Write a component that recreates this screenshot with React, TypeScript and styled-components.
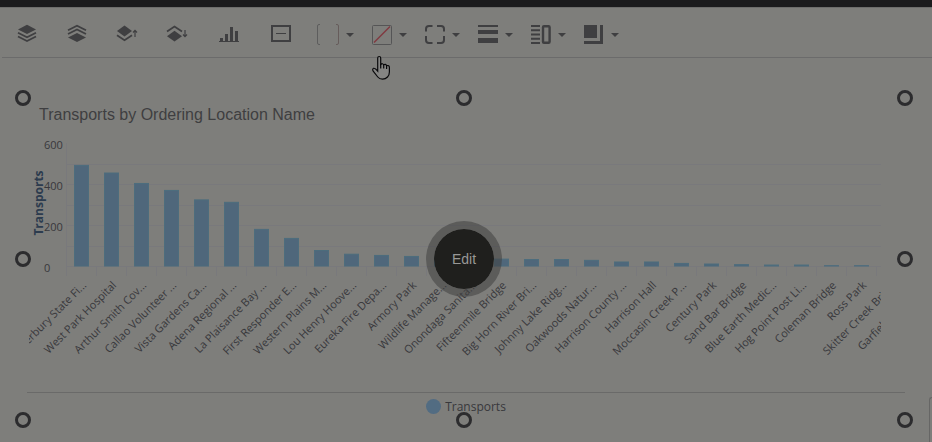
import React from "react";
import styled, { createGlobalStyle } from "styled-components";

const ink = "#3f3f41";

const GlobalStyle = createGlobalStyle`
  body {
    margin: 0;
    background: #7e7e7b;
    font-family: "Liberation Sans", Arial, sans-serif;
    overflow: hidden;
  }
`;

const Page = styled.main`
  display: flex;
  flex-direction: column;
  min-height: 100vh;
`;

const TopBar = styled.div`
  height: 7px;
  background: #1b1b1d;
  border-bottom: 1px solid #6d6d6c;
`;

const Toolbar = styled.div`
  position: relative;
  display: flex;
  margin-left: 2px;
  padding: 15px 13px 10px;
  border-bottom: 1px solid #6b6b6b;
`;

const ToolGroup = styled.div<{ $gap: number; $before?: number }>`
  display: flex;
  gap: ${(p) => p.$gap}px;
  margin-left: ${(p) => p.$before ?? 0}px;
`;

const ToolButton = styled.button`
  display: flex;
  align-items: center;
  gap: 6px;
  padding: 0;
  border: 0;
  background: none;
  color: ${ink};
`;

const Glyph = styled.svg`
  display: block;
  width: 24px;
  height: 24px;
`;

const Caret = styled.svg`
  display: block;
  width: 8px;
  height: 4px;
`;

const Pointer = styled.svg`
  position: absolute;
  left: 369px;
  top: 47px;
  width: 20px;
  height: 26px;
`;

const Stage = styled.section`
  display: flex;
  flex: 1;
  gap: 24px;
  padding: 40px 0 0 23px;
`;

const Widget = styled.article`
  position: relative;
  flex: 1;
  align-self: flex-start;
  box-sizing: border-box;
  padding-top: 8px;
`;

const NextWidget = styled.div`
  width: 2px;
  margin-top: 299px;
  border: 1px solid #666665;
  border-width: 1px 0 0 1px;
  border-top-left-radius: 4px;
`;

const Title = styled.h2`
  margin: 0 16px 6px;
  font-size: 16px;
  font-weight: 400;
  line-height: 18px;
  color: ${ink};
`;

const Chart = styled.svg`
  display: block;
  width: 100%;
  height: auto;
  font-family: "Open Sans", sans-serif;
`;

const Legend = styled.div`
  display: flex;
  align-items: center;
  justify-content: center;
  gap: 4px;
  height: 27px;
  margin: 4px 0 0 4px;
  border-top: 1px solid #6a6a69;
  font-family: "Open Sans", sans-serif;
  font-size: 12px;
  color: #38383b;
`;

const Swatch = styled.span`
  width: 15px;
  height: 15px;
  border-radius: 50%;
  background: #526c82;
`;

const Handle = styled.span<{ $x: number; $y: number }>`
  position: absolute;
  left: ${(p) => p.$x}%;
  top: ${(p) => p.$y}%;
  box-sizing: border-box;
  width: 16px;
  height: 16px;
  margin: -8px 0 0 -8px;
  border: 3px solid #2c2c2e;
  border-radius: 50%;
`;

const EditButton = styled.button`
  position: absolute;
  left: 50%;
  top: 50%;
  box-sizing: border-box;
  width: 76px;
  height: 76px;
  margin: -38px 0 0 -38px;
  padding: 0;
  border: 8px solid rgba(64, 64, 63, 0.55);
  border-radius: 50%;
  background: #1f1f1d;
  background-clip: padding-box;
  color: #989896;
  font-family: "Liberation Sans", Arial, sans-serif;
  font-size: 14px;
`;

type Tool = { label: string; art: React.ReactNode };

const stroke = (width: number) => ({ fill: "none", stroke: "currentColor", strokeWidth: width });

const orderTools: Tool[] = [
  {
    label: "Bring to front",
    art: (
      <>
        <path d="M12 1.8 21 6.5 12 11 3 6.5Z" fill="currentColor" />
        <path d="M3 9.8 12 14.3 21 9.8M3 13.5 12 18 21 13.5" {...stroke(1.8)} />
      </>
    ),
  },
  {
    label: "Send to back",
    art: (
      <>
        <path d="M12 10 21 14.5 12 19 3 14.5Z" fill="currentColor" />
        <path d="M3 7.2 12 2.7 21 7.2M3 11 12 6.5 21 11" {...stroke(1.8)} />
      </>
    ),
  },
  {
    label: "Bring forward",
    art: (
      <>
        <path d="M9.5 2.6 17 8 9.5 13.4 2 8Z" fill="currentColor" />
        <path d="M2 12.2 9.5 17.2 17 12.2" {...stroke(1.8)} />
        <path d="M20 14V8M18 9.5 20 7.3 22 9.5" {...stroke(1.2)} />
      </>
    ),
  },
  {
    label: "Send backward",
    art: (
      <>
        <path d="M9.5 7.8 17 13.2 9.5 18.5 2 13.2Z" fill="currentColor" />
        <path d="M2 8.6 9.5 3.6 17 8.6" {...stroke(1.8)} />
        <path d="M20 7V13M18 11.5 20 13.7 22 11.5" {...stroke(1.2)} />
      </>
    ),
  },
];

const insertTools: Tool[] = [
  {
    label: "Chart",
    art: <path d="M2 18H3V15H6V18H8V11H11V18H13V4H16V18H18V8H21V18H22V19H2Z" fill="currentColor" />,
  },
  {
    label: "Text panel",
    art: (
      <>
        <rect x="3" y="3" width="18" height="15" {...stroke(2)} />
        <path d="M7 10.5H17" {...stroke(1)} />
      </>
    ),
  },
];

const styleTools: Tool[] = [
  {
    label: "Background colour",
    art: (
      <>
        <path d="M4 1.5H3Q1.5 1.5 1.5 3V20Q1.5 21.5 3 21.5H4" fill="none" stroke="#5d5d5d" />
        <path d="M20 1.5H21Q22.5 1.5 22.5 3V20Q22.5 21.5 21 21.5H20" fill="none" stroke="#665c5b" />
      </>
    ),
  },
  {
    label: "Border colour",
    art: (
      <>
        <rect x="3.5" y="2.5" width="19" height="19" rx="1" fill="none" stroke="#555556" />
        <path d="M5 19.5 21 3.5" fill="none" stroke="#803840" strokeWidth="1.5" />
      </>
    ),
  },
  {
    label: "Border style",
    art: (
      <path
        d="M10.5 3H7Q4 3 4 6V8.5M15 3H19Q22 3 22 6V8.5M4 13V17Q4 20 7 20H10.5M22 13V17Q22 20 19 20H15"
        {...stroke(2)}
      />
    ),
  },
  { label: "Border width", art: <path d="M3 2H23V4H3ZM3 7H23V11H3ZM3 15H23V20H3Z" fill="currentColor" /> },
  {
    label: "Legend position",
    art: (
      <>
        <path d="M3 3H12M3 7.2H12M3 11.5H12M3 15.8H12M3 20H12" {...stroke(2)} />
        <rect x="15" y="3.2" width="6.6" height="16.6" rx="1" {...stroke(2.4)} />
      </>
    ),
  },
  { label: "Shadow", art: <path d="M3 2H16V15H3ZM19 2H22V21H3V18H19Z" fill="currentColor" /> },
];

const locations: [string, number][] = [
  ["Waterbury State Fi...", 493],
  ["West Park Hospital", 456],
  ["Arthur Smith Cov...", 405],
  ["Callao Volunteer ...", 371],
  ["Vista Gardens Ca...", 325],
  ["Adena Regional ...", 313],
  ["La Plaisance Bay ...", 181],
  ["First Responder E...", 137],
  ["Western Plains M...", 78],
  ["Lou Henry Hoove...", 60],
  ["Eureka Fire Depa...", 54],
  ["Armory Park", 49],
  ["Wildlife Manage...", 45],
  ["Onondaga Sanita...", 40],
  ["Fifteenmile Bridge", 36],
  ["Big Horn River Bri...", 34],
  ["Johnny Lake Ridg...", 34],
  ["Oakwoods Natur...", 30],
  ["Harrison County ...", 22],
  ["Harrison Hall", 22],
  ["Moccasin Creek P...", 15],
  ["Century Park", 12],
  ["Sand Bar Bridge", 9],
  ["Blue Earth Medic...", 7],
  ["Hog Point Post Li...", 7],
  ["Coleman Bridge", 4],
  ["Ross Park", 4],
  ["Skitter Creek Brid...", 0],
  ["Garfield County ...", 0],
];

const axisX = 44;
const plotRight = 858;
const baseY = 136;
const step = 30;
const yOf = (value: number) => baseY - (value * 41) / 200;

function BarChart() {
  return (
    <Chart viewBox="0 0 882 258" role="img" aria-label="Transports by ordering location name">
      <defs>
        <clipPath id="plot-area">
          <rect x="6" y="0" width={plotRight - 6} height="258" />
        </clipPath>
      </defs>
      <g stroke="#79797c" shapeRendering="crispEdges">
        {[0, 100, 200, 300, 400, 500].map((v) => (
          <line key={v} x1={axisX} x2={plotRight} y1={Math.round(yOf(v)) + 0.5} y2={Math.round(yOf(v)) + 0.5} />
        ))}
        <line x1={axisX - 0.5} x2={axisX - 0.5} y1="13" y2="146" />
        {locations.slice(0, 27).map(([name], i) => (
          <line key={name} x1={axisX + step * (i + 1) - 0.5} x2={axisX + step * (i + 1) - 0.5} y1={baseY} y2="146" />
        ))}
      </g>
      <g fill="#38383b" fontSize="11">
        {[0, 200, 400, 600].map((v) => (
          <text key={v} x="21" y={Math.round(yOf(v)) + 6}>
            {v}
          </text>
        ))}
      </g>
      <text transform="translate(20 73) rotate(-90)" textAnchor="middle" fontSize="12" fontWeight="700" fill="#2c3b4e">
        Transports
      </text>
      <g fill="#4f677b" stroke="#4d6d7d" strokeWidth="1">
        {locations.slice(0, 27).map(([name, value], i) => (
          <rect
            key={name}
            x={axisX + step * i + 7.5}
            y={yOf(value) + 0.5}
            width="14"
            height={Math.max(baseY - yOf(value) - 0.5, 0.3)}
          />
        ))}
      </g>
      <g clipPath="url(#plot-area)" fill="#38383b" fontSize="11" textAnchor="end">
        {locations.map(([name], i) => (
          <text key={name} transform={`translate(${axisX + step * i + 20} 156) rotate(-45)`}>
            {name}
          </text>
        ))}
      </g>
    </Chart>
  );
}

function ToolIcon({ tool, menu }: { tool: Tool; menu?: boolean }) {
  return (
    <ToolButton type="button" aria-label={tool.label} aria-haspopup={menu ? "menu" : undefined}>
      <Glyph viewBox="0 0 24 24">{tool.art}</Glyph>
      {menu && (
        <Caret viewBox="0 0 8 4">
          <path d="M0 0H8L4 4Z" fill="currentColor" />
        </Caret>
      )}
    </ToolButton>
  );
}

const handles = [
  [0, 0],
  [50, 0],
  [100, 0],
  [0, 50],
  [100, 50],
  [0, 100],
  [50, 100],
  [100, 100],
];

export default function App() {
  return (
    <Page>
      <GlobalStyle />
      <TopBar />
      <Toolbar role="toolbar" aria-label="Widget tools">
        <ToolGroup $gap={26}>
          {orderTools.map((t) => (
            <ToolIcon key={t.label} tool={t} />
          ))}
        </ToolGroup>
        <ToolGroup $gap={28} $before={28}>
          {insertTools.map((t) => (
            <ToolIcon key={t.label} tool={t} />
          ))}
        </ToolGroup>
        <ToolGroup $gap={15} $before={23}>
          {styleTools.map((t) => (
            <ToolIcon key={t.label} tool={t} menu />
          ))}
        </ToolGroup>
        <Pointer viewBox="0 0 20 26" aria-hidden="true">
          <path
            d="M6.7 14V3Q6.7 1.5 8.2 1.5T9.7 3V9.5Q11.5 7.8 12.7 9.8Q14.6 8.6 15.6 10.7Q18.4 9.8 18.4 12.8V17Q18.4 20 16.5 22Q14.5 24.2 11.5 24.2Q8.5 24.2 6.8 22L2.2 16.2Q1 14 2.6 13.3Q4 12.8 6.7 16Z"
            fill="#858583"
            stroke="#09090b"
            strokeWidth="1.2"
          />
          <path d="M9.7 9V13.5M12.7 9.8V13.5M15.6 10.7V14" fill="none" stroke="#09090b" strokeWidth="1.2" />
        </Pointer>
      </Toolbar>
      <Stage>
        <Widget>
          <Title>Transports by Ordering Location Name</Title>
          <BarChart />
          <Legend>
            <Swatch />
            Transports
          </Legend>
          {handles.map(([x, y]) => (
            <Handle key={`${x}-${y}`} $x={x} $y={y} />
          ))}
          <EditButton type="button">Edit</EditButton>
        </Widget>
        <NextWidget />
      </Stage>
    </Page>
  );
}
